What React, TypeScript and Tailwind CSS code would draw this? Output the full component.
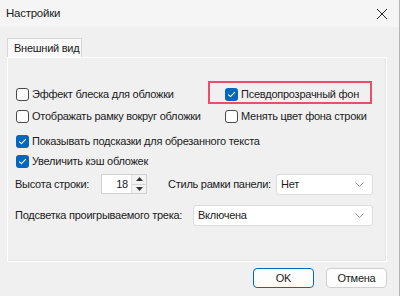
import React from "react";

function Check({ checked }: { checked?: boolean }) {
  return checked ? (
    <span className="w-[13px] h-[13px] rounded-[3px] bg-[#0067c0] flex items-center justify-center shrink-0">
      <svg width="9" height="9" viewBox="0 0 9 9">
        <path d="M1.5 4.8 L3.5 6.6 L7.6 2.3" stroke="#fff" strokeWidth="1.1" fill="none" strokeLinecap="round" strokeLinejoin="round" />
      </svg>
    </span>
  ) : (
    <span className="w-[13px] h-[13px] rounded-[3px] bg-white border border-[#4a4a4a] shrink-0" />
  );
}

function CheckRow({ checked, label }: { checked?: boolean; label: string }) {
  return (
    <div className="flex items-center gap-[3px] whitespace-nowrap">
      <Check checked={checked} />
      <span>{label}</span>
    </div>
  );
}

function Chevron() {
  return (
    <svg width="9" height="5" viewBox="0 0 9 5">
      <path d="M0.5 0.5 L4.5 4.5 L8.5 0.5" stroke="#9a9a9a" strokeWidth="1" fill="none" />
    </svg>
  );
}

function Select({ value, className }: { value: string; className: string }) {
  return (
    <div className={"bg-white border border-[#dcdcdc] rounded-[3px] flex items-center justify-between pl-[4px] pr-[8px] shrink-0 " + className}>
      <span>{value}</span>
      <Chevron />
    </div>
  );
}

export default function App() {
  return (
    <div className="w-[400px] h-[296px] bg-[#f0f0f0] flex flex-col text-[11px] tracking-[-0.25px] text-[#1b1b1b] font-['Liberation_Sans',Arial,sans-serif] overflow-hidden border-r border-[#b5b5b5] leading-none whitespace-nowrap">
      <div className="h-[27px] bg-[#f5f5f5] flex items-center justify-between pl-[6px] pr-[11px] shrink-0">
        <span className="text-[11.5px]">Настройки</span>
        <svg width="12" height="12" viewBox="0 0 12 12">
          <path d="M1 1 L11 11 M11 1 L1 11" stroke="#222" strokeWidth="1" />
        </svg>
      </div>
      <div className="flex flex-col pl-[7px] pt-[11px]">
        <div className="flex">
          <div className="h-[19px] w-[75px] bg-[#f9f9f9] border border-b-0 border-[#d6d6d6] flex items-center pl-[6px]">
            Внешний вид
          </div>
        </div>
        <div className="relative w-[380px] h-[205px] border border-white shadow-[inset_-1px_-1px_0_#e6e6e6] flex flex-col pl-[8px]">
          <div className="absolute left-[200px] top-[23px] w-[164px] h-[23px] border-2 border-[#ec4d67] pointer-events-none" />
          <div className="mt-[26px] h-[20px] flex items-center">
            <div className="w-[209px] shrink-0">
              <CheckRow label="Эффект блеска для обложки" />
            </div>
            <CheckRow checked label="Псевдопрозрачный фон" />
          </div>
          <div className="h-[24px] flex items-center">
            <div className="w-[209px] shrink-0">
              <CheckRow label="Отображать рамку вокруг обложки" />
            </div>
            <CheckRow label="Менять цвет фона строки" />
          </div>
          <div className="mt-[3px] h-[20px] flex items-center">
            <CheckRow checked label="Показывать подсказки для обрезанного текста" />
          </div>
          <div className="h-[20px] flex items-center">
            <CheckRow checked label="Увеличить кэш обложек" />
          </div>
          <div className="mt-[2px] h-[22px] flex items-center -ml-[1px]">
            <span className="w-[86px] shrink-0">Высота строки:</span>
            <div className="w-[46px] h-[20px] bg-white border border-[#d0d0d0] flex items-center shrink-0">
              <span className="flex-1 text-right pr-[3px]">18</span>
              <div className="w-[15px] h-full flex flex-col border-l border-[#e0e0e0] bg-[#f3f3f3]">
                <div className="flex-1 flex items-center justify-center border-b border-[#d6d6d6]">
                  <svg width="7" height="4" viewBox="0 0 7 4"><path d="M0 4 L3.5 0 L7 4 Z" fill="#333" /></svg>
                </div>
                <div className="flex-1 flex items-center justify-center">
                  <svg width="7" height="4" viewBox="0 0 7 4"><path d="M0 0 L3.5 4 L7 0 Z" fill="#333" /></svg>
                </div>
              </div>
            </div>
            <span className="ml-[21px] w-[108px] shrink-0">Стиль рамки панели:</span>
            <Select value="Нет" className="w-[97px] h-[21px]" />
          </div>
          <div className="mt-[10px] h-[21px] flex items-center -ml-[1px]">
            <span className="w-[178px] shrink-0">Подсветка проигрываемого трека:</span>
            <Select value="Включена" className="w-[180px] h-[21px]" />
          </div>
        </div>
        <div className="flex mt-[6px] pl-[246px] gap-[12px]">
          <div className="w-[61px] h-[20px] bg-[#fdfdfd] border border-[#0067c0] rounded-[4px] flex items-center justify-center">OK</div>
          <div className="w-[61px] h-[20px] bg-[#fdfdfd] border border-[#d0d0d0] rounded-[4px] flex items-center justify-center">Отмена</div>
        </div>
      </div>
    </div>
  );
}
